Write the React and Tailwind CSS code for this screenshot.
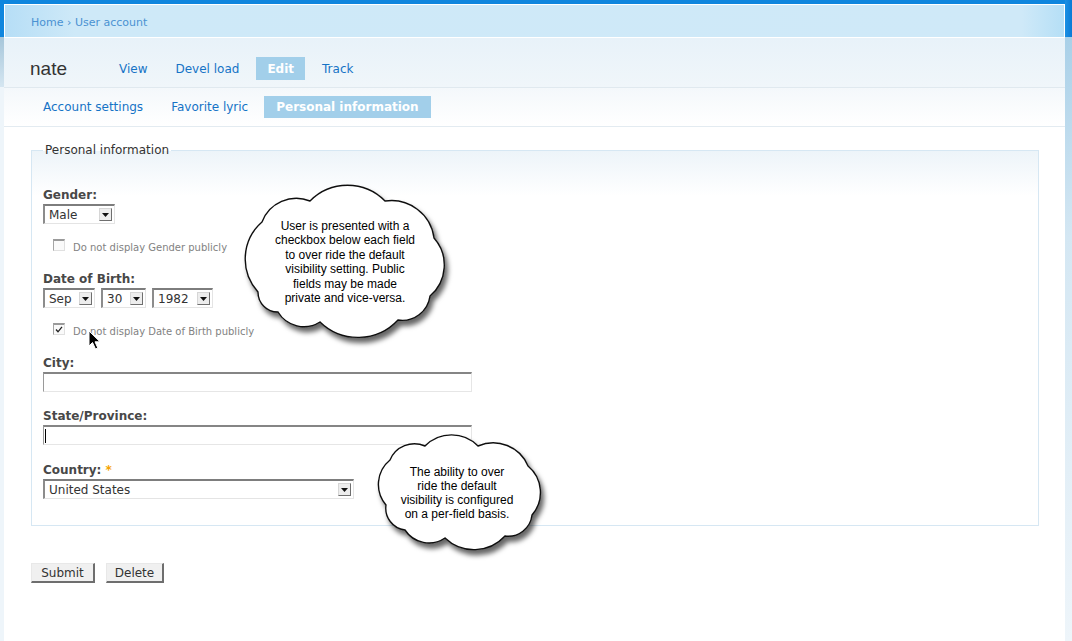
const font = "font-['DejaVu_Sans','Noto_Sans',sans-serif]";

function cloudPath(pts, k) {
    let d = `M${pts[0][0]} ${pts[0][1]}`;
    for (let i = 1; i <= pts.length; i++) {
        const a = pts[i - 1];
        const b = pts[i % pts.length];
        const c = Math.hypot(b[0] - a[0], b[1] - a[1]);
        const r = (c * k).toFixed(1);
        d += ` A${r} ${r} 0 0 1 ${b[0]} ${b[1]}`;
    }
    return d + ' Z';
}

const cloudOne = [
    [258, 292], [262, 222], [310, 201], [385, 201], [434, 238],
    [430, 296], [398, 320], [320, 322], [278, 312],
];

const cloudTwo = [
    [386, 505], [390, 460], [425, 446], [478, 446], [528, 466],
    [532, 515], [505, 536], [445, 538], [405, 530],
];

function Arrow() {
    return (
        <span className="flex items-center justify-center w-[13px] h-[13px] mr-[2px] border border-t-[#d6d6d6] border-l-[#d6d6d6] border-r-[#6f6f6f] border-b-[#6f6f6f] bg-[#ededed]">
            <svg width="7" height="4" viewBox="0 0 7 4">
                <path d="M0 0 L7 0 L3.5 4 Z" fill="#111" />
            </svg>
        </span>
    );
}

function Select({ value, width }) {
    return (
        <div
            className={`flex items-center h-[20px] bg-white border-t-2 border-l-2 border-r border-b border-t-[#7d7d7d] border-l-[#8c8c8c] border-r-[#e4e4e4] border-b-[#e4e4e4] ${width}`}
        >
            <span className="flex-1 pl-[4px] text-[12px] text-[#333] leading-none">{value}</span>
            <Arrow />
        </div>
    );
}

function TextInput({ caret }) {
    return (
        <div className="flex items-center w-[429px] h-[20px] bg-white border-t-2 border-l border-r border-b border-t-[#858585] border-l-[#9a9a9a] border-r-[#e6e6e6] border-b-[#e6e6e6]">
            {caret && <span className="ml-[1px] w-px h-[14px] bg-black" />}
        </div>
    );
}

function Checkbox({ checked, label }) {
    return (
        <div className="flex items-center ml-[10px] h-[14px]">
            <span className="flex items-center justify-center w-[12px] h-[12px] bg-[#fafafa] border-t-2 border-l border-r border-b border-t-[#9a9a9a] border-l-[#a5a5a5] border-r-[#e0e0e0] border-b-[#e0e0e0]">
                {checked && (
                    <svg width="8" height="7" viewBox="0 0 8 7">
                        <path d="M1 3.5 L3 5.8 L7 0.8" fill="none" stroke="#222" strokeWidth="1.3" />
                    </svg>
                )}
            </span>
            <span className="ml-[8px] mt-[5px] text-[10px] text-[#828282]">{label}</span>
        </div>
    );
}

function Label({ children }) {
    return <div className="text-[12px] font-bold text-[#484848] leading-[16px]">{children}</div>;
}

function Tab({ children, active }) {
    return active ? (
        <span className="px-[11px] h-[23px] flex items-center bg-[#a2cfea] text-white font-bold text-[12px]">{children}</span>
    ) : (
        <span className="px-[11px] h-[23px] flex items-center text-[#1673c6] text-[12px]">{children}</span>
    );
}

function SubTab({ children, active }) {
    return active ? (
        <span className="px-[12px] h-[22px] flex items-center bg-[#a2cfea] text-white font-bold text-[12px]">{children}</span>
    ) : (
        <span className="px-[12px] h-[22px] flex items-center text-[#1673c6] text-[12px]">{children}</span>
    );
}

export default function App() {
    return (
        <div className={`relative w-[1072px] h-[641px] overflow-hidden bg-white ${font}`}>
            <div className="flex h-full">
                {/* left edge */}
                <div className="w-[4px] flex flex-col">
                    <div className="h-[37px] bg-[#0f86de]" />
                    <div className="h-[50px] bg-[linear-gradient(to_bottom,#a6c6da,#d5e6f1)]" />
                    <div className="flex-1 bg-[#eef5fa]" />
                </div>

                {/* page */}
                <div className="flex-1 flex flex-col">
                    <div className="h-[4px] bg-[#0f86de]" />
                    <div className="h-[33px] flex items-center pl-[26px] pt-[4px] bg-[linear-gradient(to_right,#b6def6,#cee9f8_70px,#cfe9f8_96%,#b5dff6)] border-t border-l border-r border-white">
                        <span className="text-[11px] text-[#4a92d2]">Home › User account</span>
                    </div>
                    <div className="h-[51px] flex items-end pb-[4px] pl-[26px] bg-[linear-gradient(to_bottom,#e8f2f9,#f0f6fa)] border-t border-white border-b border-b-[#e0e9ef]">
                        <div className="flex items-center">
                            <span className="font-['Liberation_Sans',Arial,sans-serif] text-[19px] text-[#333] w-[78px]">nate</span>
                            <div className="flex gap-[6px]">
                                <Tab>View</Tab>
                                <Tab>Devel load</Tab>
                                <Tab active>Edit</Tab>
                                <Tab>Track</Tab>
                            </div>
                        </div>
                    </div>
                    <div className="h-[39px] flex items-center pl-[27px] bg-[linear-gradient(to_bottom,#f4f8fb,#ffffff)] border-b border-[#e3ebf1]">
                        <div className="flex gap-[4px]">
                            <SubTab>Account settings</SubTab>
                            <SubTab>Favorite lyric</SubTab>
                            <SubTab active>Personal information</SubTab>
                        </div>
                    </div>

                    <div className="flex-1 pl-[27px] pr-[25px] pt-[14px] border-r border-white">
                        <fieldset className="border border-[#d6e7f3] pl-[11px] pr-[12px] pt-[28px] pb-[26px] bg-[linear-gradient(to_bottom,#edf4f9,#ffffff_45px)]">
                            <legend className="px-[2px] text-[12px] text-[#333] leading-[18px]">Personal information</legend>

                            <Label>Gender:</Label>
                            <div className="mt-[1px]">
                                <Select value="Male" width="w-[72px]" />
                            </div>
                            <div className="mt-[14px]">
                                <Checkbox label="Do not display Gender publicly" />
                            </div>

                            <div className="mt-[19px]">
                                <Label>Date of Birth:</Label>
                            </div>
                            <div className="mt-[1px] flex gap-[6px]">
                                <Select value="Sep" width="w-[52px]" />
                                <Select value="30" width="w-[45px]" />
                                <Select value="1982" width="w-[61px]" />
                            </div>
                            <div className="mt-[14px]">
                                <Checkbox checked label="Do not display Date of Birth publicly" />
                            </div>

                            <div className="mt-[19px]">
                                <Label>City:</Label>
                            </div>
                            <div className="mt-[1px]">
                                <TextInput />
                            </div>

                            <div className="mt-[16px]">
                                <Label>State/Province:</Label>
                            </div>
                            <div className="mt-[1px]">
                                <TextInput caret />
                            </div>

                            <div className="mt-[17px]">
                                <Label>
                                    Country: <span className="text-[#f5a300]">*</span>
                                </Label>
                            </div>
                            <div className="mt-[1px]">
                                <Select value="United States" width="w-[311px]" />
                            </div>
                        </fieldset>

                        <div className="flex gap-[11px] mt-[37px]">
                            <button className="h-[20px] w-[64px] text-[12px] text-[#333] bg-[#f0f0f0] border-t border-l border-t-[#e8e8e8] border-l-[#e8e8e8] border-r-2 border-b-2 border-r-[#6e6e6e] border-b-[#6e6e6e]">
                                Submit
                            </button>
                            <button className="h-[20px] w-[58px] text-[12px] text-[#333] bg-[#f0f0f0] border-t border-l border-t-[#e8e8e8] border-l-[#e8e8e8] border-r-2 border-b-2 border-r-[#6e6e6e] border-b-[#6e6e6e]">
                                Delete
                            </button>
                        </div>
                    </div>
                </div>

                {/* right edge */}
                <div className="w-[7px] flex flex-col">
                    <div className="h-[37px] bg-[linear-gradient(to_right,#1a90e4,#0a7bd6)]" />
                    <div className="flex-1 bg-[linear-gradient(to_bottom,#a9d0e8,#d4e7f3_200px,#eef5fa)]" />
                </div>
            </div>

            {/* annotation clouds */}
            <svg className="absolute left-0 top-0 pointer-events-none" width="1072" height="641">
                <defs>
                    <filter id="cloudShadow" x="-20%" y="-20%" width="140%" height="150%">
                        <feDropShadow dx="3" dy="5" stdDeviation="2.5" floodColor="#000" floodOpacity="0.6" />
                    </filter>
                </defs>
                <path d={cloudPath(cloudOne, 0.7)} fill="#fff" stroke="#111" strokeWidth="1.4" filter="url(#cloudShadow)" />
                <path d={cloudPath(cloudTwo, 0.7)} fill="#fff" stroke="#111" strokeWidth="1.4" filter="url(#cloudShadow)" />
                {/* mouse pointer */}
                <path
                    d="M89 331 L89 346 L92.5 342.5 L95.5 349 L97.8 348 L95 341.8 L100 341.8 Z"
                    fill="#000"
                    stroke="#fff"
                    strokeWidth="1"
                />
            </svg>

            <div className="absolute left-[260px] top-[219px] w-[170px] text-center font-['Liberation_Sans',Arial,sans-serif] text-[12px] leading-[14.4px] text-black whitespace-nowrap">
                User is presented with a<br />
                checkbox below each field<br />
                to over ride the default<br />
                visibility setting. Public<br />
                fields may be made<br />
                private and vice-versa.
            </div>
            <div className="absolute left-[382px] top-[465px] w-[150px] text-center font-['Liberation_Sans',Arial,sans-serif] text-[12px] leading-[14px] text-black whitespace-nowrap">
                The ability to over<br />
                ride the default<br />
                visibility is configured<br />
                on a per-field basis.
            </div>
        </div>
    );
}
